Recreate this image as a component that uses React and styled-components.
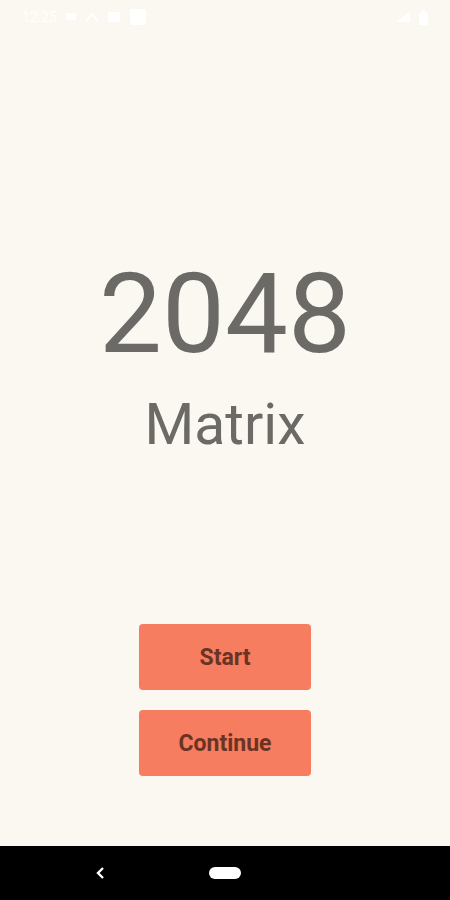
import React from "react";
import styled, { createGlobalStyle } from "styled-components";

const GlobalStyle = createGlobalStyle`
  html, body {
    margin: 0;
    padding: 0;
    background: #faf8f1;
    font-family: Roboto, "Liberation Sans", sans-serif;
  }
`;

const Screen = styled.div`
  width: 450px;
  height: 900px;
  display: flex;
  flex-direction: column;
  background: #faf8f1;
`;

const StatusBar = styled.div`
  height: 34px;
  display: flex;
  align-items: center;
  justify-content: space-between;
  padding: 0 22px;
  color: #ffffff;
  font-size: 14px;
`;

const StatusGroup = styled.div`
  display: flex;
  align-items: center;
  gap: 8px;
`;

const Main = styled.div`
  flex: 1;
  display: flex;
  flex-direction: column;
  align-items: center;
  padding-top: 224px;
`;

const Title = styled.div`
  font-size: 112px;
  line-height: 1;
  color: #6b6a66;
`;

const Subtitle = styled.div`
  margin-top: 26px;
  font-size: 57px;
  line-height: 1;
  color: #6b6a66;
`;

const Buttons = styled.div`
  margin-top: 171px;
  display: flex;
  flex-direction: column;
  gap: 20px;
`;

const Button = styled.button`
  width: 172px;
  height: 66px;
  border: 0;
  border-radius: 4px;
  background: #f67d5f;
  color: #6b3324;
  font-family: Roboto, "Liberation Sans", sans-serif;
  font-weight: 700;
  font-size: 23px;
  cursor: pointer;
`;

const NavBar = styled.div`
  height: 54px;
  background: #000;
  display: flex;
  align-items: center;
  justify-content: center;
  position: relative;
`;

const Back = styled.svg`
  position: absolute;
  left: 94px;
  top: 20px;
`;

const Home = styled.div`
  width: 32px;
  height: 12px;
  border-radius: 6px;
  background: #fff;
`;

export default function App() {
  return (
    <Screen>
      <GlobalStyle />
      <StatusBar>
        <StatusGroup>
          <span>12:25</span>
          <svg width="12" height="12" viewBox="0 0 12 12"><rect x="1" y="2" width="10" height="7" fill="#fff" /></svg>
          <svg width="14" height="10" viewBox="0 0 14 10"><path d="M1 9 L7 2 L13 9" stroke="#fff" fill="none" strokeWidth="2" /></svg>
          <svg width="14" height="12" viewBox="0 0 14 12"><rect x="1" y="1" width="12" height="10" fill="#fff" /></svg>
          <svg width="18" height="18" viewBox="0 0 18 18"><rect x="1" y="1" width="16" height="16" rx="2" fill="#fff" /></svg>
        </StatusGroup>
        <StatusGroup>
          <svg width="16" height="12" viewBox="0 0 16 12"><path d="M1 11 L15 11 L15 1 Z" fill="#fff" /></svg>
          <svg width="9" height="15" viewBox="0 0 9 15"><rect x="0" y="2" width="9" height="13" rx="1" fill="#fff" /><rect x="3" y="0" width="3" height="2" fill="#fff" /></svg>
        </StatusGroup>
      </StatusBar>
      <Main>
        <Title>2048</Title>
        <Subtitle>Matrix</Subtitle>
        <Buttons>
          <Button>Start</Button>
          <Button>Continue</Button>
        </Buttons>
      </Main>
      <NavBar>
        <Back width="12" height="14" viewBox="0 0 12 14">
          <path d="M9 2 L4 7 L9 12" stroke="#fff" strokeWidth="2.4" fill="none" />
        </Back>
        <Home />
      </NavBar>
    </Screen>
  );
}
